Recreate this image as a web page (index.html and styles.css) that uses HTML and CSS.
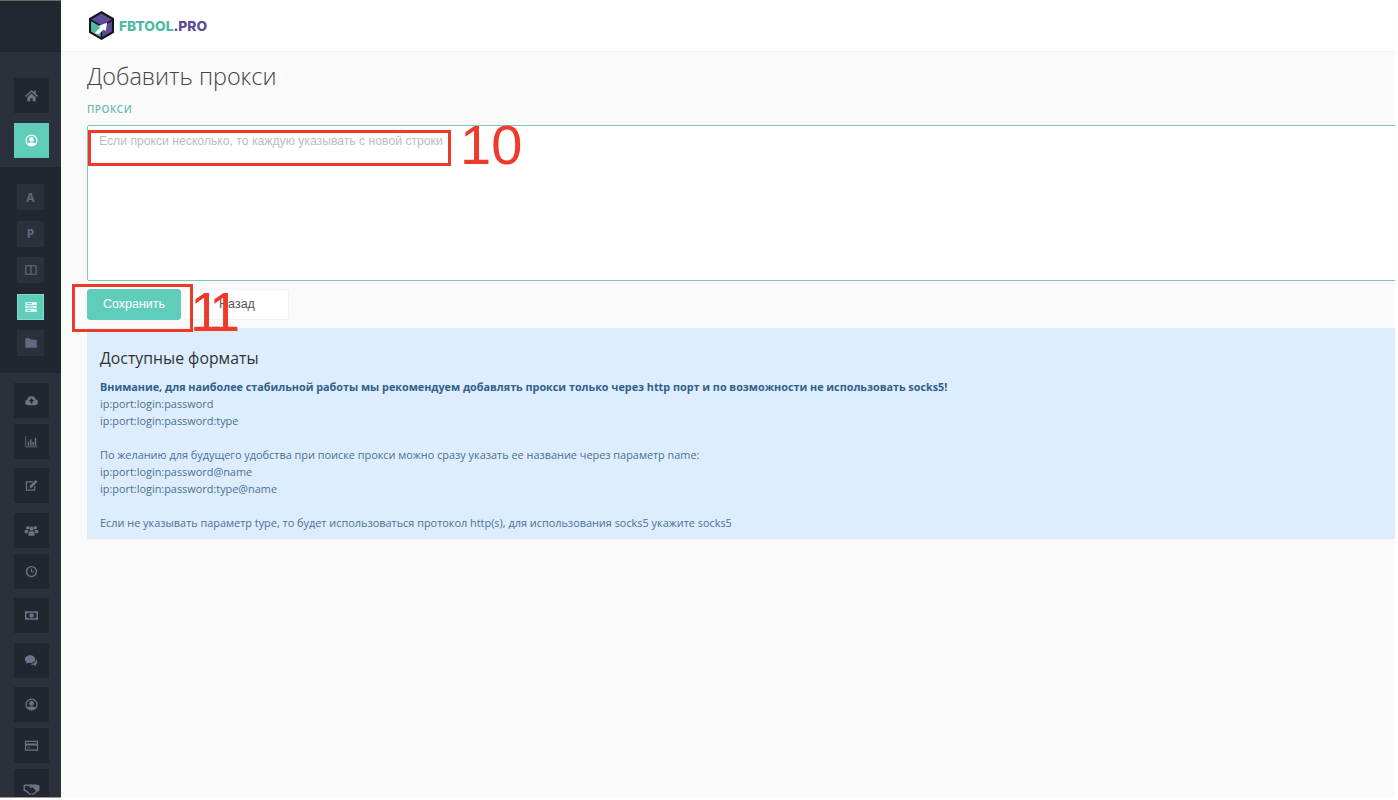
FILE: index.html
```html
<!DOCTYPE html>
<html lang="ru">
<head>
  <meta charset="UTF-8">
  <title>FBTOOL.PRO</title>
  <link rel="stylesheet" href="styles.css">
</head>
<body>
  <div class="app">
    <aside class="sidebar">
      <div class="side-top"></div>
      <div class="side-group">
        <a class="side-btn"><svg viewBox="0 0 16 16"><path d="M8 2 1 8.500l1 1L8 4.200l6 5.300 1-1-2.500-2.300V3h-2v1.400zM3.500 9.800V14h3.300v-3.200h2.400V14h3.300V9.800L8 5.800z"/></svg></a>
        <a class="side-btn active"><svg viewBox="0 0 16 16"><path fill-rule="evenodd" d="M8 1.500a6.500 6.500 0 1 0 0 13 6.500 6.500 0 0 0 0-13zm0 1.300a5.200 5.200 0 0 1 4.100 8.400C11.300 10.300 9.800 10 8 10s-3.300.3-4.100 1.200A5.200 5.200 0 0 1 8 2.800zM8 4.300a2.500 2.500 0 1 0 0 5 2.500 2.500 0 0 0 0-5z"/></svg></a>
      </div>
      <div class="side-sub">
        <a class="sub-btn"><span>A</span></a>
        <a class="sub-btn"><span>P</span></a>
        <a class="sub-btn"><svg viewBox="0 0 16 16"><path fill-rule="evenodd" d="M1.500 2.500h13v11h-13zm1.300 1.300v8.400h4.500V3.800zm5.900 0v8.400h4.500V3.800z"/></svg></a>
        <a class="sub-btn active"><svg viewBox="0 0 16 16"><path d="M1.500 2.500h13v3h-13zM1.500 6.500h13v3h-13zM1.500 10.500h13v3h-13z"/><path class="cut" d="M3 4h6M3 8h8M3 12h5"/></svg></a>
        <a class="sub-btn"><svg viewBox="0 0 16 16"><path d="M1.500 2.500h5l1.500 1.700h6.500V13.500h-13z"/></svg></a>
      </div>
      <div class="side-group lower">
        <a class="side-btn gap-s"><svg viewBox="0 0 16 16"><path fill-rule="evenodd" d="M4 13a3 3 0 0 1-.6-5.900A4.700 4.700 0 0 1 12.500 6.700 3.200 3.200 0 0 1 12 13zM8 5.500 5 8.700h2V11h2V8.700h2z"/></svg></a>
        <a class="side-btn gap-l"><svg viewBox="0 0 16 16"><path d="M1.500 2h.8v11.200h12.200v.8h-13zM4 8h1.500v4.500H4zM6.500 5.500H8v7H6.500zM9 8.500h1.500v4H9zM11.500 4H13v8.500h-1.500z"/></svg></a>
        <a class="side-btn gap-x"><svg viewBox="0 0 16 16"><path d="M2 3.500h8l-1.200 1.200H3.200v7.600h7.600V9l1.200-1.200v5.700H2z"/><path d="M6 8.500 12.500 2 14.500 4 8 10.500H6z"/></svg></a>
        <a class="side-btn gap-s"><svg viewBox="0 0 16 16"><circle cx="4" cy="5" r="1.800"/><circle cx="12" cy="5" r="1.800"/><circle cx="8" cy="6" r="2.300"/><path d="M.8 11V8.500c0-.6.500-1 1-1h3L4 9.500V11zM15.200 11V8.500c0-.6-.5-1-1-1h-3l.8 2V11zM4.800 13.500v-3c0-1 .7-1.800 1.700-1.800h3c1 0 1.700.8 1.700 1.800v3z"/></svg></a>
        <a class="side-btn gap-l"><svg viewBox="0 0 16 16"><path fill-rule="evenodd" d="M8 2a6 6 0 1 0 0 12A6 6 0 0 0 8 2zm0 1.500a4.500 4.500 0 1 1 0 9 4.500 4.500 0 0 1 0-9zM7.400 5v3.700h3.100V7.600H8.600V5z"/></svg></a>
        <a class="side-btn gap-x"><svg viewBox="0 0 16 16"><path fill-rule="evenodd" d="M1 3.500h14v9H1zm3 1.500a1.800 1.800 0 0 1-1.500 1.500v3A1.800 1.800 0 0 1 4 11h8a1.800 1.800 0 0 1 1.500-1.500v-3A1.800 1.800 0 0 1 12 5zm4 .5a2.500 2.500 0 1 0 0 5 2.500 2.500 0 0 0 0-5z"/></svg></a>
        <a class="side-btn gap-l"><svg viewBox="0 0 16 16"><path d="M6.500 2.500C3.500 2.500 1 4.300 1 6.600c0 1.200.7 2.300 1.800 3L2 11.800l2.600-1.400c.6.200 1.200.2 1.900.2 3 0 5.500-1.800 5.500-4S9.500 2.500 6.500 2.500z"/><path d="M13 6.200c.1.200.1.300.1.500 0 2.800-2.800 4.900-6 5 .8.800 2 1.200 3.300 1.200l2.800 1.300-.6-2c1-.6 1.600-1.600 1.600-2.700 0-1.300-.9-2.500-1.200-3.300z"/></svg></a>
        <a class="side-btn gap-s"><svg viewBox="0 0 16 16"><path fill-rule="evenodd" d="M8 1.500a6.500 6.500 0 1 0 0 13 6.500 6.500 0 0 0 0-13zm0 1.300a5.200 5.200 0 0 1 4.100 8.400C11.300 10.300 9.800 10 8 10s-3.300.3-4.100 1.200A5.200 5.200 0 0 1 8 2.800zM8 4.300a2.500 2.500 0 1 0 0 5 2.500 2.500 0 0 0 0-5z"/></svg></a>
        <a class="side-btn gap-s"><svg viewBox="0 0 16 16"><path fill-rule="evenodd" d="M1 3h14v10.500H1zm1.200 1.200v1.600h11.600V4.200zm0 3.800v4.300h11.600V8zM3.500 10.200h3v.8h-3z"/></svg></a>
        <a class="side-btn"><svg class="icon-low" viewBox="0 0 16 16"><path fill-rule="evenodd" d="M.5 5 3 4l2 .5L7.500 4 9 4.500 11 4l2 .5L15.500 5v5L13.500 11l-4 3-1.500-.5-1.500.5-3.500-3-2.500-1zm1.300 1v3.200l1.700.7 3.700 3 .8-.3.900.3 3.500-2.600-3.700-3.600L7 7.500 5.500 6.800 7 5.400 5 5.800 3 5.300z"/></svg></a>
      </div>
    </aside>

    <div class="main">
      <header class="topbar">
        <a class="logo">
          <svg class="logo-mark" viewBox="0 0 28 30">
            <path fill="#15141c" d="M14 0 27 7.500v15L14 30 1 22.500v-15z"/>
            <path fill="#5e4a96" d="M14 2.500 24.800 8.700v12.600L14 27.500 3.200 21.300V8.700z"/>
            <path fill="#4fb9a6" d="M3.200 10 13 15.500v11.500L3.200 21.300z"/>
            <path fill="#15141c" d="M3.200 8.700 14 14.700 24.800 8.700l.8 1.300L14.700 16.200v11.300h-1.400V16.200L2.400 10z"/>
            <path fill="#fff" d="M7 23l5.500-6-1.600-1.500 9-3.500-1.500 9-2-1.800-5.400 5z"/>
          </svg>
          <span class="logo-fb">FBTOOL</span><span class="logo-pro">.PRO</span>
        </a>
      </header>

      <main class="content">
        <h1 class="page-title">Добавить прокси</h1>
        <label class="field-label" for="proxies">ПРОКСИ</label>
        <textarea id="proxies" class="proxy-input" placeholder="Если прокси несколько, то каждую указывать с новой строки"></textarea>
        <div class="actions">
          <button class="btn btn-save">Сохранить</button>
          <button class="btn btn-back">Назад</button>
        </div>
        <section class="info">
          <h2 class="info-title">Доступные форматы</h2>
          <p class="info-text"><b>Внимание, для наиболее стабильной работы мы рекомендуем добавлять прокси только через http порт и по возможности не использовать socks5!</b><br>
          ip:port:login:password<br>
          ip:port:login:password:type<br>
          <br>
          По желанию для будущего удобства при поиске прокси можно сразу указать ее название через параметр name:<br>
          ip:port:login:password@name<br>
          ip:port:login:password:type@name<br>
          <br>
          Если не указывать параметр type, то будет использоваться протокол http(s), для использования socks5 укажите socks5</p>
        </section>
      </main>
    </div>
  </div>

  <!-- red callouts drawn on top of the screenshot -->
  <div class="mark mark-10"></div>
  <div class="mark-num num-10">10</div>
  <div class="mark mark-11"></div>
  <div class="mark-num num-11">11</div>
</body>
</html>
```

FILE: styles.css
```css
html, body {
  margin: 0;
  height: 800px;
  overflow: hidden;
  background: #fefefe;
}
* {
  box-sizing: border-box;
}
.app {
  display: flex;
  width: 1395px;
  height: 798px;
  overflow: hidden;
  font-family: "Open Sans", sans-serif;
}
.sidebar {
  width: 61px;
  flex: none;
  background: #2b303b;
  border-bottom: 1px solid #9a9a9a;
  display: flex;
  flex-direction: column;
  overflow: hidden;
}
.side-top {
  height: 52px;
  flex: none;
  background: #23272f;
  border-top: 1px solid #6a6a6a;
}
.side-group {
  padding: 26px 0 0 14px;
  height: 115px;
  flex: none;
}
.side-btn {
  display: flex;
  align-items: center;
  justify-content: center;
  flex: none;
  width: 35px;
  height: 35px;
  background: #22262e;
  margin-bottom: 10px;
}
.side-btn svg {
  width: 15px;
  height: 15px;
  fill: #6d7387;
}
.side-btn .icon-low {
  width: 17px;
  height: 17px;
  margin-bottom: -3px;
}
.side-btn.active {
  background: #5fcdba;
}
.side-btn.active svg {
  fill: #fff;
}
.side-sub {
  height: 206px;
  flex: none;
  background: #22262e;
  padding: 17px 0 0 17px;
}
.sub-btn {
  display: flex;
  align-items: center;
  justify-content: center;
  width: 27px;
  height: 26px;
  background: #2b303b;
  margin-bottom: 10.500px;
  color: #636a7e;
  font: bold 12px "Open Sans", sans-serif;
}
.sub-btn svg {
  width: 14px;
  height: 14px;
  fill: #636a7e;
}
.sub-btn.active {
  background: #5fcdba;
  border: 1px solid #7fdccb;
}
.sub-btn.active svg {
  fill: #fff;
}
.sub-btn .cut {
  fill: none;
  stroke: #5fcdba;
  stroke-width: 1;
}
.side-group.lower {
  padding-top: 10px;
  height: auto;
}
.side-btn.gap-s {
  margin-bottom: 6px;
}
.side-btn.gap-l {
  margin-bottom: 9px;
}
.side-btn.gap-x {
  margin-bottom: 10px;
}

.main {
  flex: 1;
  min-width: 0;
  height: 797px;
  display: flex;
  flex-direction: column;
  background: #fafafa;
}
.topbar {
  height: 52px;
  flex: none;
  background: #fff;
  border-bottom: 1px solid #f2f2f2;
  padding: 11px 0 0 27px;
}
.logo {
  display: flex;
  align-items: center;
  font: 800 13.800px Inter, sans-serif;
}
.logo-mark {
  width: 27px;
  height: 29px;
  margin-right: 4px;
}
.logo-fb {
  color: #4fb9a6;
}
.logo-pro {
  color: #5e4a96;
}
.content {
  padding: 8px 0 0 26px;
}
.page-title {
  margin: 0;
  font-size: 23.400px;
  font-weight: 300;
  line-height: 33px;
  color: #444;
}
.field-label {
  display: block;
  margin-top: 9px;
  font-size: 10px;
  font-weight: 600;
  line-height: 14px;
  letter-spacing: 0.500px;
  color: #6cbcae;
}
.proxy-input {
  display: block;
  width: calc(100% + 4px);
  height: 156px;
  margin-top: 9px;
  padding: 8px 11px;
  border: 1px solid #7cc8ba;
  border-radius: 2px;
  background: #fff;
  font: 12.200px "Liberation Sans", sans-serif;
  resize: none;
  outline: none;
}
.proxy-input::placeholder {
  color: #bdbdbd;
}
.actions {
  display: flex;
  gap: 4px;
  margin-top: 8px;
}
.btn {
  height: 31px;
  border-radius: 3px;
  font: 12.500px/1 "Liberation Sans", sans-serif;
  padding: 0;
}
.btn-save {
  width: 94px;
  background: #5fcdba;
  border: 1px solid #5fcdba;
  color: #fff;
}
.btn-back {
  width: 104px;
  background: #fff;
  border: 1px solid #f2f2f2;
  color: #555;
}
.info {
  margin-top: 8px;
  width: calc(100% + 4px);
  height: 211px;
  padding: 19px 13px 0;
  background: #ddedfd;
}
.info-title {
  margin: 0;
  font-size: 15.800px;
  font-weight: 400;
  line-height: 22px;
  color: #333;
}
.info-text {
  margin: 9px 0 0;
  font-size: 10.900px;
  line-height: 17px;
  color: #4a6f94;
}
.info-text b {
  font-size: 10.800px;
  color: #2f5f8c;
}

/* annotations */
.mark {
  position: absolute;
  border: 3px solid #ee3a2a;
}
.mark-10 {
  left: 88px;
  top: 130px;
  width: 363px;
  height: 36px;
}
.mark-11 {
  left: 72px;
  top: 284px;
  width: 121px;
  height: 48px;
}
.mark-num {
  position: absolute;
  font: 56px/1 "Liberation Sans", sans-serif;
  color: #ee3a2a;
}
.num-10 {
  left: 460px;
  top: 117px;
}
.num-11 {
  left: 190px;
  top: 284px;
  letter-spacing: -8px;
}
```
